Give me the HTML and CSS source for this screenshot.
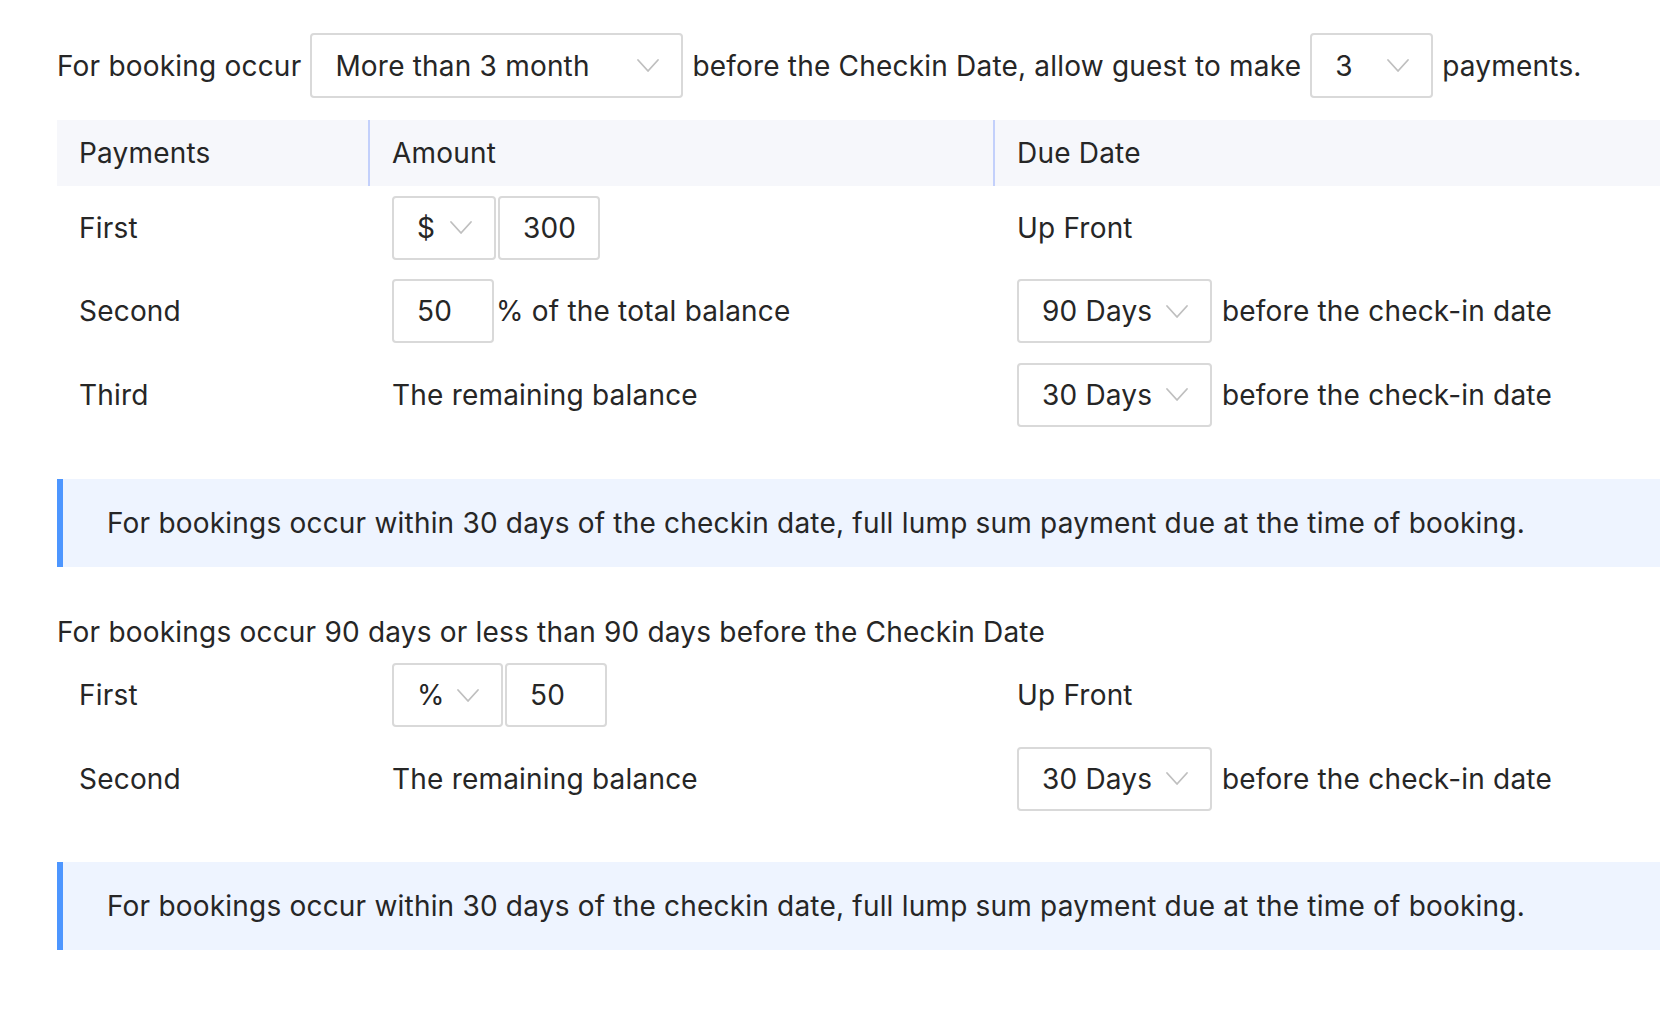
FILE: index.html
```html
<!DOCTYPE html>
<html lang="en">
<head>
<meta charset="utf-8">
<title>Payment schedule</title>
<link rel="stylesheet" href="styles.css">
</head>
<body>
<div class="page">
  <div class="rule-line">
    <span class="txt">For booking occur</span>
    <div class="select w-month"><span class="val">More than 3 month</span><svg class="arrow" viewBox="0 0 22 13"><polyline points="1,1 11,12 21,1"/></svg></div>
    <span class="txt">before the Checkin Date, allow guest to make</span>
    <div class="select w-count"><span class="val">3</span><svg class="arrow" viewBox="0 0 22 13"><polyline points="1,1 11,12 21,1"/></svg></div>
    <span class="txt">payments.</span>
  </div>

  <div class="table table-main">
    <div class="row head">
      <div class="cell c1">Payments</div>
      <div class="cell c2 divided">Amount</div>
      <div class="cell c3 divided">Due Date</div>
    </div>
    <div class="row">
      <div class="cell c1">First</div>
      <div class="cell c2">
        <div class="group">
          <div class="select w-cur"><span class="val">$</span><svg class="arrow" viewBox="0 0 22 13"><polyline points="1,1 11,12 21,1"/></svg></div>
          <div class="input w-num">300</div>
        </div>
      </div>
      <div class="cell c3">Up Front</div>
    </div>
    <div class="row">
      <div class="cell c1">Second</div>
      <div class="cell c2">
        <div class="input w-num">50</div><span class="after-input">% of the total balance</span>
      </div>
      <div class="cell c3">
        <div class="select w-days"><span class="val">90 Days</span><svg class="arrow" viewBox="0 0 22 13"><polyline points="1,1 11,12 21,1"/></svg></div>
        <span class="after-select">before the check-in date</span>
      </div>
    </div>
    <div class="row">
      <div class="cell c1">Third</div>
      <div class="cell c2">The remaining balance</div>
      <div class="cell c3">
        <div class="select w-days"><span class="val">30 Days</span><svg class="arrow" viewBox="0 0 22 13"><polyline points="1,1 11,12 21,1"/></svg></div>
        <span class="after-select">before the check-in date</span>
      </div>
    </div>
  </div>

  <div class="alert">For bookings occur within 30 days of the checkin date, full lump sum payment due at the time of booking.</div>

  <div class="subtitle">For bookings occur 90 days or less than 90 days before the Checkin Date</div>

  <div class="table">
    <div class="row">
      <div class="cell c1">First</div>
      <div class="cell c2">
        <div class="group">
          <div class="select w-pct"><span class="val">%</span><svg class="arrow" viewBox="0 0 22 13"><polyline points="1,1 11,12 21,1"/></svg></div>
          <div class="input w-num">50</div>
        </div>
      </div>
      <div class="cell c3">Up Front</div>
    </div>
    <div class="row">
      <div class="cell c1">Second</div>
      <div class="cell c2">The remaining balance</div>
      <div class="cell c3">
        <div class="select w-days"><span class="val">30 Days</span><svg class="arrow" viewBox="0 0 22 13"><polyline points="1,1 11,12 21,1"/></svg></div>
        <span class="after-select">before the check-in date</span>
      </div>
    </div>
  </div>

  <div class="alert alert-last">For bookings occur within 30 days of the checkin date, full lump sum payment due at the time of booking.</div>
</div>
</body>
</html>
```

FILE: styles.css
```css
html, body {
  margin: 0;
  padding: 0;
  background: #ffffff;
}

body {
  font-family: Inter, "Noto Sans", "Liberation Sans", sans-serif;
  font-size: 28px;
  line-height: 44px;
  letter-spacing: 0.2px;
  color: #262626;
  overflow: hidden;
}

.page {
  padding: 33px 0 0 57px;
}

.rule-line {
  display: flex;
  align-items: center;
  gap: 9px;
  height: 65px;
  white-space: nowrap;
}

.select,
.input {
  box-sizing: border-box;
  height: 64px;
  border: 2px solid #d9d9d9;
  border-radius: 4px;
  background: #ffffff;
  display: flex;
  align-items: center;
  flex: none;
}

.rule-line .select {
  height: 65px;
}

.select {
  justify-content: space-between;
  padding: 0 22px 0 23px;
}

.input {
  padding: 0 0 0 23px;
}

.arrow {
  width: 22px;
  height: 13px;
  flex: none;
  overflow: visible;
}

.arrow polyline {
  fill: none;
  stroke: #bfbfbf;
  stroke-width: 1.8;
  stroke-linecap: round;
  stroke-linejoin: round;
}

.w-month { width: 373px; }
.w-count { width: 123px; }
.w-cur { width: 104px; }
.w-pct { width: 111px; }
.w-num { width: 102px; }
.w-days { width: 195px; }

.table {
  display: flex;
  flex-direction: column;
}

.table-main {
  margin-top: 22px;
}

.row {
  display: grid;
  grid-template-columns: 311px 625px 1fr;
  height: 83.5px;
}

.row.head {
  height: 66px;
  background: #f6f7fb;
}

.cell {
  box-sizing: border-box;
  display: flex;
  align-items: center;
  padding-left: 22px;
  white-space: nowrap;
  border-left: 2px solid transparent;
}

.cell.c1 {
  border-left: 0;
}

.row.head .cell.divided {
  border-left-color: #c3d0fb;
}

.group {
  display: flex;
  gap: 2px;
}

.after-input {
  margin-left: 2px;
}

.after-select {
  margin-left: 10px;
}

.alert {
  margin-top: 42px;
  height: 88px;
  box-sizing: border-box;
  display: flex;
  align-items: center;
  background: #eef4ff;
  border-left: 6px solid #4d96ff;
  padding-left: 44px;
  white-space: nowrap;
}

.subtitle {
  margin-top: 43px;
  height: 44px;
  white-space: nowrap;
}

.alert-last {
  margin-top: 41px;
}
```
